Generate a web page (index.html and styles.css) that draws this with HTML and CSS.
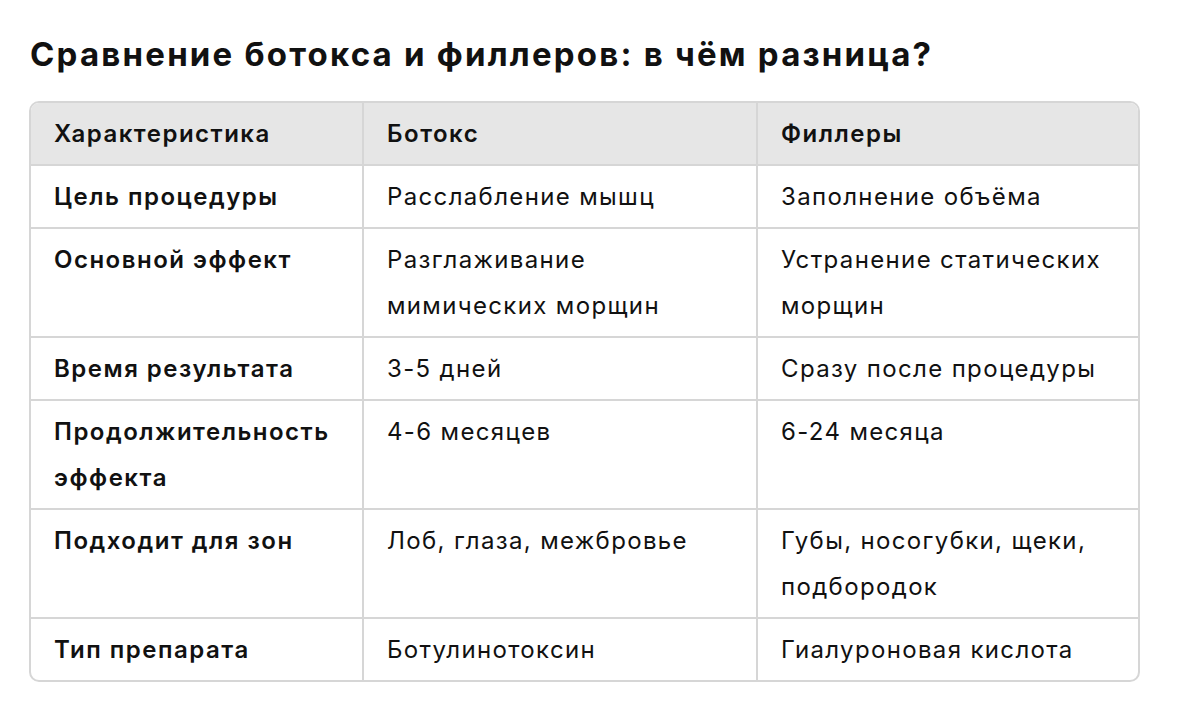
FILE: index.html
```html
<!DOCTYPE html>
<html lang="ru">
<head>
<meta charset="utf-8">
<link rel="stylesheet" href="styles.css">
</head>
<body>
<main class="page">
  <h1 class="title">Сравнение ботокса и филлеров: в чём разница?</h1>
  <div class="table-wrap">
    <table class="cmp">
      <colgroup>
        <col class="c1"><col class="c2"><col class="c3">
      </colgroup>
      <thead>
        <tr><th>Характеристика</th><th>Ботокс</th><th>Филлеры</th></tr>
      </thead>
      <tbody>
        <tr><td class="k">Цель процедуры</td><td>Расслабление мышц</td><td>Заполнение объёма</td></tr>
        <tr><td class="k">Основной эффект</td><td>Разглаживание мимических морщин</td><td>Устранение статических морщин</td></tr>
        <tr><td class="k">Время результата</td><td>3-5 дней</td><td>Сразу после процедуры</td></tr>
        <tr><td class="k">Продолжительность эффекта</td><td>4-6 месяцев</td><td>6-24 месяца</td></tr>
        <tr><td class="k">Подходит для зон</td><td>Лоб, глаза, межбровье</td><td>Губы, носогубки, щеки, подбородок</td></tr>
        <tr><td class="k">Тип препарата</td><td>Ботулинотоксин</td><td>Гиалуроновая кислота</td></tr>
      </tbody>
    </table>
  </div>
</main>
</body>
</html>
```
FILE: styles.css
```css
html, body {
  margin: 0;
  padding: 0;
  background: #ffffff;
}
body {
  font-family: Inter, "Noto Sans", "Liberation Sans", sans-serif;
  color: #111111;
}
.page {
  padding: 30px 0 0 29px;
  width: 1111px;
}
.title {
  margin: 0 0 23px 1px;
  font-size: 33px;
  line-height: 48px;
  font-weight: 700;
  letter-spacing: 2.2px;
}
.table-wrap {
  border: 2px solid #d6d6d6;
  border-radius: 10px;
  overflow: hidden;
  box-sizing: border-box;
  width: 1111px;
}
.cmp {
  width: 100%;
  border-collapse: collapse;
  table-layout: fixed;
  font-size: 24px;
  line-height: 46px;
  letter-spacing: 1.35px;
}
.c1 { width: 332px; }
.c2 { width: 394px; }
.c3 { width: auto; }
.cmp th, .cmp td {
  text-align: left;
  vertical-align: top;
  padding: 8px 20px 7px 23px;
  border: 2px solid #d6d6d6;
}
.cmp tr > :first-child { border-left: none; }
.cmp tr > :last-child { border-right: none; }
.cmp thead th {
  border-top: none;
  background: #e6e6e6;
  font-weight: 600;
  letter-spacing: 1.5px;
}
.cmp tbody tr:last-child td { border-bottom: none; }
.cmp td.k { font-weight: 600; letter-spacing: 1.5px; }
```
